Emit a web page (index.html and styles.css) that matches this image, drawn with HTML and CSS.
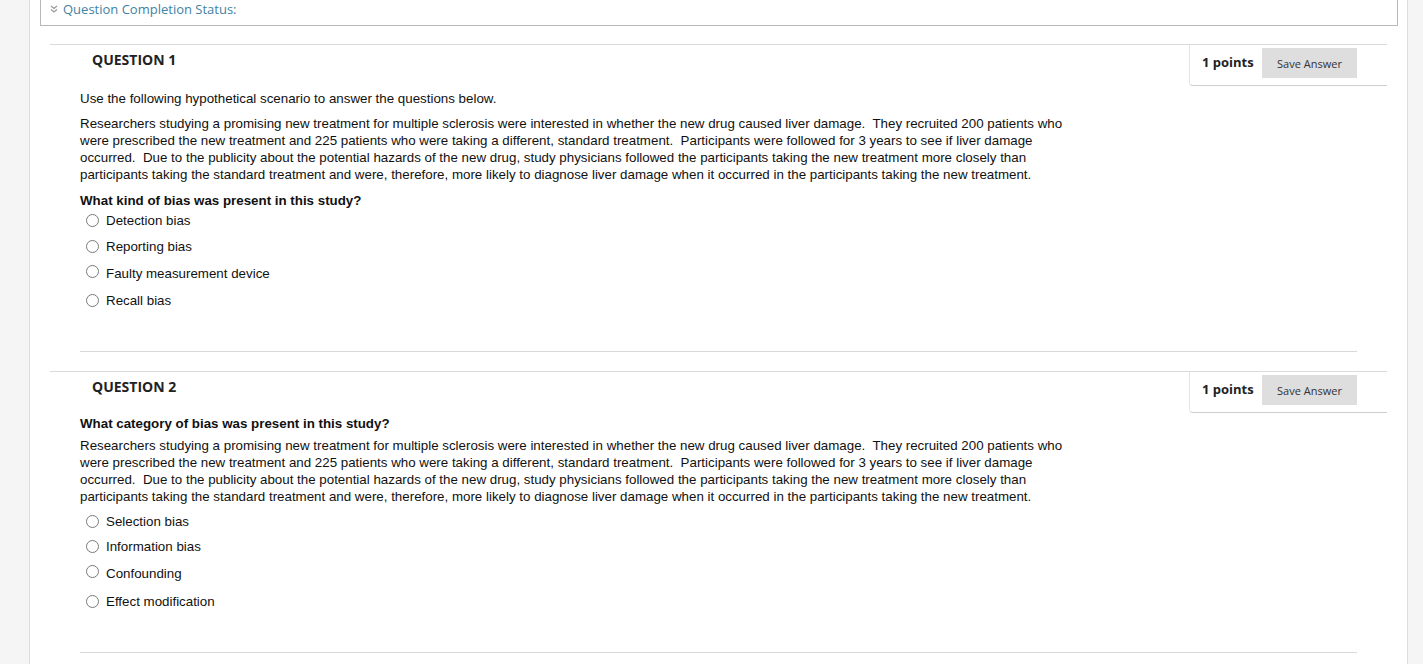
FILE: index.html
```html
<!DOCTYPE html>
<html lang="en">
<head>
<meta charset="utf-8">
<title>Quiz</title>
<link rel="stylesheet" href="styles.css">
</head>
<body>
<div class="page">
  <div class="status">
    <svg class="status-icon" width="8" height="8" viewBox="0 0 8 8"><path d="M1 1 L4 3.5 L7 1 M1 4.5 L4 7 L7 4.5" fill="none" stroke="#9a9a9a" stroke-width="1.3"/></svg>
    <span class="status-text">Question Completion Status:</span>
  </div>

  <section class="question q1">
    <div class="q-head">
      <h3 class="q-title">QUESTION 1</h3>
      <div class="points-box">
        <span class="points">1 points</span>
        <button class="save">Save Answer</button>
      </div>
    </div>
    <div class="q-body">
      <p class="intro">Use the following hypothetical scenario to answer the questions below.</p>
      <p class="scenario">Researchers studying a promising new treatment for multiple sclerosis were interested in whether the new drug caused liver damage.&nbsp; They recruited 200 patients who<br>were prescribed the new treatment and 225 patients who were taking a different, standard treatment.&nbsp; Participants were followed for 3 years to see if liver damage<br>occurred.&nbsp; Due to the publicity about the potential hazards of the new drug, study physicians followed the participants taking the new treatment more closely than<br>participants taking the standard treatment and were, therefore, more likely to diagnose liver damage when it occurred in the participants taking the new treatment.</p>
      <p class="prompt p1">What kind of bias was present in this study?</p>
      <ul class="options">
        <li class="opt"><span class="radio"></span>Detection bias</li>
        <li class="opt"><span class="radio"></span>Reporting bias</li>
        <li class="opt opt3"><span class="radio"></span>Faulty measurement device</li>
        <li class="opt opt4"><span class="radio"></span>Recall bias</li>
      </ul>
      <hr class="sep">
    </div>
  </section>

  <section class="question q2">
    <div class="q-head">
      <h3 class="q-title">QUESTION 2</h3>
      <div class="points-box">
        <span class="points">1 points</span>
        <button class="save">Save Answer</button>
      </div>
    </div>
    <div class="q-body">
      <p class="prompt p2">What category of bias was present in this study?</p>
      <p class="scenario s2">Researchers studying a promising new treatment for multiple sclerosis were interested in whether the new drug caused liver damage.&nbsp; They recruited 200 patients who<br>were prescribed the new treatment and 225 patients who were taking a different, standard treatment.&nbsp; Participants were followed for 3 years to see if liver damage<br>occurred.&nbsp; Due to the publicity about the potential hazards of the new drug, study physicians followed the participants taking the new treatment more closely than<br>participants taking the standard treatment and were, therefore, more likely to diagnose liver damage when it occurred in the participants taking the new treatment.</p>
      <ul class="options o2">
        <li class="opt"><span class="radio"></span>Selection bias</li>
        <li class="opt"><span class="radio"></span>Information bias</li>
        <li class="opt opt3"><span class="radio"></span>Confounding</li>
        <li class="opt opt4"><span class="radio"></span>Effect modification</li>
      </ul>
      <hr class="sep">
    </div>
  </section>
</div>
</body>
</html>
```

FILE: styles.css
```css
* { box-sizing: border-box; }
html, body { margin: 0; padding: 0; }
body {
  background: #f5f5f5;
  font-family: "Liberation Sans", Arial, sans-serif;
  color: #111;
  height: 664px;
  overflow: hidden;
}
.page {
  margin-left: 29px;
  width: 1379px;
  height: 664px;
  background: #fff;
  border-left: 1px solid #dcdcdc;
  border-right: 1px solid #dcdcdc;
  overflow: hidden;
}
.status {
  margin-left: 10px;
  width: 1358px;
  height: 26px;
  border: 1px solid #b8b8b8;
  border-top: none;
  display: flex;
  align-items: flex-start;
  padding-left: 9px;
  padding-top: 2px;
  font-family: "Open Sans", sans-serif;
  font-size: 13px;
  line-height: 14px;
}
.status-icon { margin-top: 3px; margin-right: 5px; }
.status-text { color: #3f82a3; }

.question {
  margin-left: 20px;
  width: 1337px;
  border-top: 1px solid #dadada;
}
.q1 { margin-top: 18px; }
.q2 { margin-top: 19px; }
.q-head {
  display: flex;
  justify-content: space-between;
  align-items: flex-start;
  height: 41px;
}
.q-title {
  margin: 5px 0 0 42px;
  font-family: "Open Sans", sans-serif;
  font-weight: 700;
  font-size: 14px;
  line-height: 20px;
  color: #222;
}
.points-box {
  width: 198px;
  height: 41px;
  border-left: 1px solid #e4e4e4;
  border-bottom: 1px solid #cfcfcf;
  border-bottom-left-radius: 4px;
  display: flex;
  align-items: flex-start;
  padding: 3px 30px 0 12px;
  font-family: "Open Sans", sans-serif;
}
.points {
  font-weight: 700;
  font-size: 13px;
  color: #222;
  line-height: 28px;
  width: 60px;
}
.save {
  width: 95px;
  height: 30px;
  border: none;
  background: #dedede;
  color: #333;
  font-family: "Open Sans", sans-serif;
  font-size: 11px;
  padding: 0;
}
.q-body { padding: 0 30px; }
p { margin: 0; font-size: 13.33px; line-height: 17px; }
.intro { margin-top: 4px; }
.scenario { margin-top: 8px; }
.prompt { font-weight: 700; }
.p1 { margin-top: 9px; }
.p2 { margin-top: 2px; }
.s2 { margin-top: 5px; }
.options { list-style: none; margin: 3px 0 0; padding: 0; }
.o2 { margin-top: 8px; }
.opt {
  display: flex;
  align-items: center;
  font-size: 13.33px;
  line-height: 17px;
  margin-top: 9px;
}
.opt:first-child { margin-top: 0; }
.opt3 { margin-top: 10px; }
.opt4 { margin-top: 10px; }
.o2 .opt { margin-top: 8px; }
.o2 .opt:first-child { margin-top: 0; }
.o2 .opt3 { margin-top: 10px; }
.o2 .opt4 { margin-top: 11px; }
.radio {
  width: 13px;
  height: 13px;
  border: 1px solid #7a7a7a;
  border-radius: 50%;
  margin: 0 7px 0 6px;
  background: #fff;
  flex: none;
}
.opt3 .radio { position: relative; top: -2px; }
.sep {
  margin: 42px 0 0;
  border: none;
  border-top: 1px solid #d8d8d8;
  height: 0;
}
```
